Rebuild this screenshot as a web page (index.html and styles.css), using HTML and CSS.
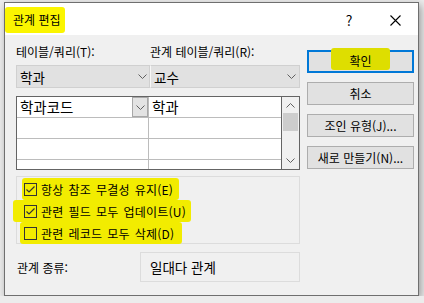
FILE: index.html
```html
<!DOCTYPE html>
<html lang="ko">

<head>
    <meta charset="UTF-8" />
    <title>관계 편집</title>
    <link rel="stylesheet" href="styles.css">
</head>

<body>
    <div class="dialog">
        <div class="titlebar">
            <span class="title mark">관계 편집</span>
            <span class="title-btn help">?</span>
            <span class="title-btn close">
                <svg width="11" height="11" viewBox="0 0 11 11">
                    <path d="M0.5 0.5 L10.5 10.5 M10.5 0.5 L0.5 10.5" stroke="#000" stroke-width="1.1" fill="none" />
                </svg>
            </span>
        </div>

        <div class="content">
            <div class="main">
                <div class="labels">
                    <span class="label-left">테이블/쿼리(T):</span>
                    <span>관계 테이블/쿼리(R):</span>
                </div>

                <div class="combos">
                    <div class="combo combo-left">
                        <span>학과</span>
                        <svg class="chevron" width="9" height="5" viewBox="0 0 9 5">
                            <polyline points="0.5,0.5 4.5,4.5 8.5,0.5" />
                        </svg>
                    </div>
                    <div class="combo combo-right">
                        <span>교수</span>
                        <svg class="chevron" width="9" height="5" viewBox="0 0 9 5">
                            <polyline points="0.5,0.5 4.5,4.5 8.5,0.5" />
                        </svg>
                    </div>
                </div>

                <!-- field pairs grid -->
                <div class="fields">
                    <div class="fields-cols">
                        <div class="field-row">
                            <div class="cell cell-left">
                                <span>학과코드</span>
                                <span class="cell-drop">
                                    <svg class="chevron" width="9" height="5" viewBox="0 0 9 5">
                                        <polyline points="0.5,0.5 4.5,4.5 8.5,0.5" />
                                    </svg>
                                </span>
                            </div>
                            <div class="cell">학과</div>
                        </div>
                        <div class="field-row">
                            <div class="cell cell-left"></div>
                            <div class="cell"></div>
                        </div>
                        <div class="field-row">
                            <div class="cell cell-left"></div>
                            <div class="cell"></div>
                        </div>
                        <div class="field-row">
                            <div class="cell cell-left"></div>
                            <div class="cell"></div>
                        </div>
                    </div>
                    <div class="scrollbar">
                        <div class="scroll-btn scroll-up">
                            <svg class="chevron" width="9" height="5" viewBox="0 0 9 5">
                                <polyline points="0.5,4.5 4.5,0.5 8.5,4.5" />
                            </svg>
                        </div>
                        <div class="scroll-thumb"></div>
                        <div class="scroll-fill"></div>
                        <div class="scroll-btn scroll-down">
                            <svg class="chevron" width="9" height="5" viewBox="0 0 9 5">
                                <polyline points="0.5,0.5 4.5,4.5 8.5,0.5" />
                            </svg>
                        </div>
                    </div>
                </div>

                <div class="options">
                    <div class="check-row mark mark-1">
                        <span class="checkbox">
                            <svg width="11" height="11" viewBox="0 0 11 11">
                                <polyline points="1.5,5.5 4,8 9.5,2.5" />
                            </svg>
                        </span>
                        <span>항상 참조 무결성 유지(E)</span>
                    </div>
                    <div class="check-row mark mark-2">
                        <span class="checkbox">
                            <svg width="11" height="11" viewBox="0 0 11 11">
                                <polyline points="1.5,5.5 4,8 9.5,2.5" />
                            </svg>
                        </span>
                        <span>관련 필드 모두 업데이트(U)</span>
                    </div>
                    <div class="check-row mark mark-3">
                        <span class="checkbox"></span>
                        <span>관련 레코드 모두 삭제(D)</span>
                    </div>
                </div>

                <div class="kind">
                    <span class="kind-label">관계 종류:</span>
                    <div class="kind-box">일대다 관계</div>
                </div>
            </div>

            <div class="actions">
                <div class="button primary"><span class="mark button-mark">확인</span></div>
                <div class="button">취소</div>
                <div class="button">조인 유형(J)...</div>
                <div class="button">새로 만들기(N)...</div>
            </div>
        </div>
    </div>
</body>

</html>
```

FILE: styles.css
```css
body {
    margin: 0;
    background-color: #ececec;
    font-family: "Noto Sans CJK KR", "Noto Sans", sans-serif;
    font-size: 12px;
    color: #000;
}

.dialog {
    box-sizing: border-box;
    width: 415px;
    height: 294px;
    margin: 2px 0 0 4px;
    border: 1px solid #6f6f6f;
    background-color: #fff;
    box-shadow: 2px 3px 8px rgba(0, 0, 0, 0.35);
}

/* marker highlight */
.mark {
    background-color: #fbf500;
    border-radius: 3px;
}

.titlebar {
    display: flex;
    height: 32px;
    background-color: #fff;
}

.title {
    height: 26px;
    line-height: 25px;
    margin-top: 4px;
    padding: 0 4px 0 8px;
}

.title-btn {
    display: flex;
    align-items: center;
    justify-content: center;
    width: 46px;
    height: 32px;
    margin-top: 1px;
}

.help {
    margin-left: auto;
    font-size: 14px;
}

.content {
    display: flex;
    height: 260px;
    padding: 0 4px 0 11px;
    background-color: #f0f0f0;
}

.main {
    width: 284px;
    padding-top: 9px;
}

.labels {
    display: flex;
    height: 16px;
    line-height: 16px;
}

.label-left {
    width: 134px;
}

.combos {
    display: flex;
    margin-top: 5px;
}

.combo {
    box-sizing: border-box;
    display: flex;
    align-items: center;
    height: 23px;
    padding: 0 3px 0 3px;
    background-color: #e1e1e1;
    border: 1px solid #d0d0d0;
    font-size: 13.5px;
}

.combo span {
    flex: 1;
}

.combo-left {
    width: 134px;
    padding-right: 2px;
}

.combo-right {
    width: 150px;
    border-left: 1px solid #f7f7f7;
}

.chevron {
    fill: none;
    stroke: #606060;
    stroke-width: 1;
}

.fields {
    box-sizing: border-box;
    display: flex;
    height: 74px;
    margin-top: 8px;
    border: 1px solid #646464;
    background-color: #fff;
    overflow: hidden;
}

.fields-cols {
    flex: 1;
}

.field-row {
    box-sizing: border-box;
    display: flex;
    height: 21px;
    border-bottom: 1px solid #bcbcbc;
}

.cell {
    box-sizing: border-box;
    display: flex;
    align-items: center;
    flex: 1;
    padding-left: 3px;
    font-size: 14.5px;
    line-height: 20px;
}

.cell-left {
    flex: none;
    width: 132px;
    border-right: 1px solid #bcbcbc;
    padding-right: 0;
}

.cell-left span:first-child {
    flex: 1;
}

.cell-drop {
    box-sizing: border-box;
    display: flex;
    align-items: center;
    justify-content: center;
    width: 16px;
    height: 20px;
    background-color: #e3e3e3;
    border: 1px solid #a8a8a8;
}

.scrollbar {
    display: flex;
    flex-direction: column;
    width: 17px;
    border-left: 1px solid #646464;
    background-color: #f0f0f0;
}

.scroll-btn {
    display: flex;
    align-items: center;
    justify-content: center;
    height: 16px;
}

.scroll-down {
    height: 17px;
}

.scroll-thumb {
    height: 18px;
    margin: 0 1px;
    background-color: #cdcdcd;
}

.scroll-fill {
    flex: 1;
}

.options {
    box-sizing: border-box;
    height: 68px;
    margin-top: 6px;
    padding-top: 1px;
    border: 1px solid #dcdcdc;
}

.check-row {
    display: flex;
    align-items: center;
    gap: 4px;
    width: fit-content;
    height: 22px;
    padding-right: 4px;
    background-color: #f2ec00;
    word-spacing: 1.5px;
    letter-spacing: 0.2px;
}

.mark-1 {
    margin-left: 5px;
    padding-left: 2px;
    padding-right: 6px;
}

.mark-2 {
    margin-left: -4px;
    padding-left: 11px;
    padding-right: 5px;
}

.mark-3 {
    margin-left: 3px;
    padding-left: 4px;
    padding-right: 8px;
}

.checkbox {
    box-sizing: border-box;
    display: flex;
    align-items: center;
    justify-content: center;
    width: 13px;
    height: 13px;
    border: 1px solid #333;
}

.checkbox svg {
    fill: none;
    stroke: #333;
    stroke-width: 1.2;
}

.kind {
    display: flex;
    align-items: center;
    height: 30px;
    margin-top: 8px;
}

.kind-label {
    width: 123px;
    padding-left: 1px;
}

.kind-box {
    box-sizing: border-box;
    display: flex;
    align-items: center;
    width: 160px;
    height: 30px;
    padding-left: 9px;
    border: 1px solid #dcdcdc;
    font-size: 13.5px;
}

.actions {
    width: 107px;
    margin-left: 7px;
    padding-top: 15px;
}

.button {
    box-sizing: border-box;
    display: flex;
    align-items: center;
    justify-content: center;
    height: 23px;
    margin-bottom: 9px;
    background-color: #e1e1e1;
    border: 1px solid #adadad;
}

.button.primary {
    border: 2px solid #0078d7;
}

.button-mark {
    height: 22px;
    line-height: 16px;
    padding: 5px 18px 1px;
    box-sizing: border-box;
    margin-top: -5px;
    background-color: #dede00;
}
```
